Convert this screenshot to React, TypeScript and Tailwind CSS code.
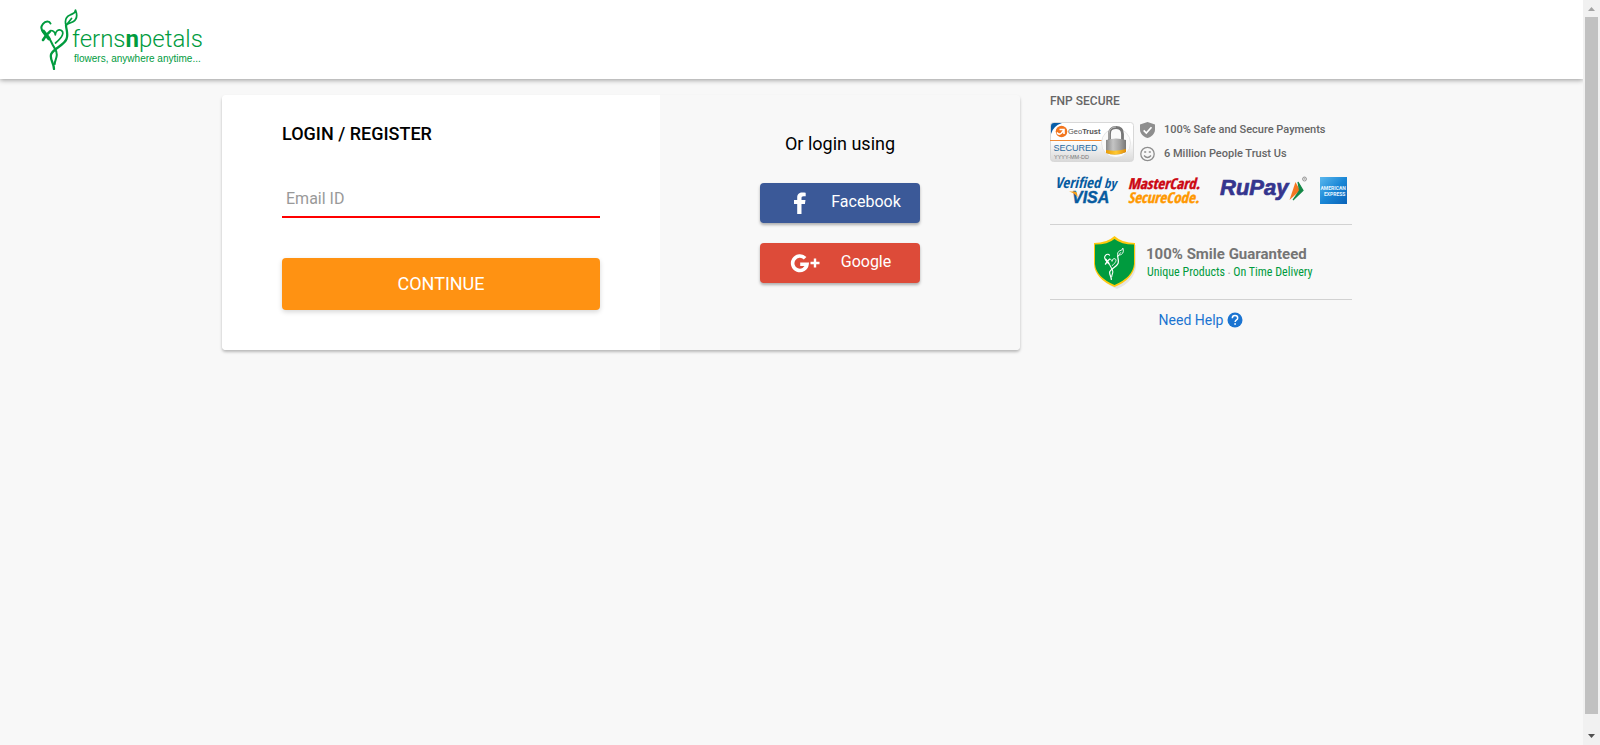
import React from "react";

function Sprig({ className }: { className: string }) {
  return (
    <svg viewBox="0 0 38 62" className={className} fill="none" stroke="currentColor" strokeLinecap="round" strokeLinejoin="round" aria-hidden="true">
      <path strokeWidth="2" d="M10.500 15.500C9.500 12.800 5.500 12.800 3 15.800C.6 18.800 1 22 4 24.500C6.500 26.500 9 29 12 35.500C14 40 17 42 16.800 47C16.600 51 14.500 53 14.800 56" />
      <path strokeWidth="3.600" d="M3.500 23.500L8.800 30.500" />
      <path strokeWidth="2.600" d="M10 23.500C8 25 5 28.500 3 32" />
      <path strokeWidth="1.700" d="M10.500 22.500C13 22.500 15 24.500 15.300 27C15.500 23 18.500 21 21 22.200C24.500 24 23 29 15.500 35" />
      <path strokeWidth="2.300" d="M26 17.500C26.300 22 28.500 26 26.500 31C24 37.500 14 40 11.200 46C9.300 51 14 55 14 61" />
      <path strokeWidth="1.700" d="M26 17.500C24.500 12 26.500 8.500 30 7C33 5.500 35.500 5.500 35.500 2C37.500 7 36.800 11.500 33 13.800C30.500 15.300 27.500 15 26 17.500L31.500 10.500" />
    </svg>
  );
}

function Logo() {
  return (
    <a href="#home" className="flex items-start text-[#009b3e]" aria-label="fernsnpetals">
      <Sprig className="h-[62px] w-[38px]" />
      <span className="-ml-1.5 flex flex-col pt-[15px]">
        <span className="text-2xl font-light leading-8">
          ferns<b className="font-bold">n</b>petals
        </span>
        <span className="pl-0.5 font-['Liberation_Sans'] text-[10px] leading-2">flowers, anywhere anytime...</span>
      </span>
    </a>
  );
}

function Scrollbar() {
  return (
    <div className="flex w-[17px] shrink-0 flex-col items-center bg-[#f1f1f1]" aria-hidden="true">
      <svg viewBox="0 0 17 17" className="size-[17px]"><path d="M5 11h7L8.500 7z" fill="#a3a3a3" /></svg>
      <div className="w-[13px] flex-1 bg-[#c1c1c1]" />
      <svg viewBox="0 0 17 31" className="h-[31px] w-[17px]"><path d="M5 20h7L8.500 24z" fill="#505050" /></svg>
    </div>
  );
}

function GeoTrust() {
  return (
    <svg viewBox="0 0 84 40" className="h-10 w-[84px]" role="img" aria-label="GeoTrust Secured">
      <defs>
        <linearGradient id="plate" x1="0" y1="0" x2="0" y2="1">
          <stop offset="0" stopColor="#fff" /><stop offset=".45" stopColor="#fff" /><stop offset="1" stopColor="#d9d9d9" />
        </linearGradient>
        <linearGradient id="steel"><stop offset="0" stopColor="#888" /><stop offset=".35" stopColor="#c4c4c4" /><stop offset=".7" stopColor="#a2a2a2" /><stop offset="1" stopColor="#777" /></linearGradient>
        <linearGradient id="brass"><stop offset="0" stopColor="#e99b08" /><stop offset=".5" stopColor="#ffc933" /><stop offset="1" stopColor="#e18c08" /></linearGradient>
      </defs>
      <rect x=".5" y=".5" width="83" height="39" rx="3" fill="url(#plate)" stroke="#d8d8d8" />
      <path d="M1 12V4Q1 1 4 1H12Q3 4 1 12" fill="#075da8" />
      <path d="M0 18.500H53" stroke="#f18a35" strokeWidth="1" />
      <circle cx="11.500" cy="9.500" r="5.800" fill="#f2761f" />
      <path d="M7 10.500Q9 13.500 11.500 11L13.500 8.500M9.500 7.500H14V12" stroke="#fff" strokeWidth="1.600" fill="none" />
      <text x="18" y="12" fontSize="7.500" fill="#555" fontFamily="Liberation Sans">Geo<tspan fontWeight="700">Trust</tspan></text>
      <text x="3.500" y="28.500" fontSize="9" fill="#27699f" fontFamily="Liberation Sans">SECURED</text>
      <text x="4" y="36.500" fontSize="5.500" fill="#777" fontFamily="Liberation Sans">YYYY-MM-DD</text>
      <circle cx="66" cy="21" r="14.500" fill="#fafafa" stroke="#ddd" strokeWidth=".7" />
      <path d="M59.500 18V12Q59.500 5.500 66 5.500T72.500 12V18" fill="none" stroke="#767676" strokeWidth="2.800" />
      <path d="M59 17V12Q59 5 66 5" fill="none" stroke="#bbb" strokeWidth="1" />
      <path d="M56 18Q66 15 76 18V30Q66 35 56 31z" fill="url(#steel)" />
      <path d="M56 28Q66 30 76 27V30Q66 35 56 31z" fill="url(#brass)" />
    </svg>
  );
}

function PaymentMarks() {
  return (
    <svg viewBox="0 -8 302 40" className="h-10 w-full" role="img" aria-label="Accepted payment networks">
      <defs>
        <linearGradient id="amex" x1="0" y1="0" x2="1" y2="1"><stop offset="0" stopColor="#5bb8ee" /><stop offset=".5" stopColor="#1a87d6" /><stop offset="1" stopColor="#0a62b8" /></linearGradient>
      </defs>
      <g fontFamily="'Open Sans Condensed','Liberation Sans Narrow','Liberation Sans',sans-serif" fontStyle="italic" fontWeight="700">
        <text x="5" y="11.500" fontSize="15" fill="#075b9f">Verified <tspan fontSize="13">by</tspan></text>
        <text x="22" y="27" fontSize="16" fill="#075b9f" stroke="#075b9f" strokeWidth=".4" fontFamily="Liberation Sans">VISA</text>
        <path d="M19 15.500H25Q27 15.500 27.200 18L27.500 21.500Q25 17 19 15.500" fill="#f7a01b" />
        <text x="78" y="12.500" fontSize="15" fill="#cc0712" stroke="#cc0712" strokeWidth=".4">MasterCard.</text>
        <text x="78" y="27" fontSize="15" fill="#ff9800" stroke="#ff9800" strokeWidth=".4">SecureCode.</text>
      </g>
      <text x="170" y="19" fontSize="22" fontFamily="Liberation Sans" fontStyle="italic" fontWeight="700" fill="#35358e" stroke="#35358e" strokeWidth=".7">RuPay</text>
      <path d="M245.500 6L250 14.500L239.500 24z" fill="#f47721" /><path d="M248 6L253 14.500L243 24L249.500 14.500z" fill="#138746" stroke="#138746" strokeWidth="1.200" />
      <circle cx="254.500" cy="3" r="2" fill="none" stroke="#777" strokeWidth=".7" /><path d="M254 4V2H255V4" fill="none" stroke="#777" strokeWidth=".4" />
      <rect x="270" y="1" width="27" height="27" fill="url(#amex)" />
      <text x="270.500" y="14" fontSize="5" fontWeight="700" fill="#e8f5ff">AMERICAN</text>
      <text x="274" y="20" fontSize="5" fontWeight="700" fill="#e8f5ff">EXPRESS</text>
    </svg>
  );
}

function GuaranteeShield() {
  return (
    <div className="relative h-[54px] w-[42px] text-white">
      <svg viewBox="0 0 42 54" className="size-full" aria-hidden="true">
        <path d="M3 10Q15 11 22 4Q30 11 42 10V31Q41 46 23 54Q4 46 3 31z" fill="#e5e5e5" />
        <path d="M0 8Q13 8 20.500 1Q28 8 41 8V29Q40 44 20.500 52Q1 44 0 29z" fill="#ffc90e" />
        <path d="M1 9.500Q14 9.500 20.500 4Q27 9.500 40 9.500V29Q39 42 20.500 50Q2 42 1 29z" fill="#009b3e" />
      </svg>
      <div className="absolute left-2 top-3"><Sprig className="h-[33px] w-6" /></div>
    </div>
  );
}

export default function App() {
  return (
    <div className="flex min-h-screen bg-[#f8f8f8] font-[Roboto,sans-serif] text-black">
      <div className="min-w-0 flex-1">
        <header className="flex h-[79px] items-start bg-white pl-10 pt-2 shadow-[0_1px_5px_rgba(0,0,0,0.4)]">
          <Logo />
        </header>
        <div className="mx-auto flex max-w-[1139px] items-start gap-[30px] pt-4 pr-[9px]">
          <main className="flex flex-1 overflow-hidden rounded shadow-[0_2px_3px_rgba(0,0,0,0.26)]">
            <form className="w-[438px] bg-white px-[60px] pb-10 pt-[27px]" onSubmit={(e) => e.preventDefault()}>
              <h1 className="text-lg font-medium leading-6">LOGIN / REGISTER</h1>
              <input id="email" type="email" aria-label="Email ID" placeholder="Email ID" className="mt-8 h-10 w-full border-b-2 border-[#f00] px-1 pt-0.5 text-base outline-none placeholder:text-[#999]" />
              <button type="submit" className="mt-10 block h-[52px] w-full rounded bg-[#ff9212] text-lg text-white shadow-[0_2px_5px_rgba(0,0,0,0.16)]">CONTINUE</button>
            </form>
            <section className="flex flex-1 flex-col items-center gap-5 bg-[#f8f8f8] pt-[37px]">
              <h2 className="mb-[7px] text-lg leading-6">Or login using</h2>
              <button type="button" className="flex h-10 w-40 items-center rounded bg-[#3b5998] pb-0.5 pl-7 text-base text-white shadow-[0_2px_3px_rgba(0,0,0,0.3)]">
                <svg viewBox="0 0 24 24" className="mt-0.5 size-6" fill="currentColor" aria-hidden="true"><path d="M9.200 23V13H6V9h3.200V6.500C9.200 3 11.300 1.500 14.300 1.500c1.400 0 2.900.2 3.400.3v3.500h-2.200c-1.700 0-2 .8-2 2V9h4l-.6 4h-3.400v10z" /></svg>
                <span className="flex-1 px-3 text-center">Facebook</span>
              </button>
              <button type="button" className="flex h-10 w-40 items-center rounded bg-[#dd4b39] pb-0.5 pl-7 text-base text-white shadow-[0_2px_3px_rgba(0,0,0,0.3)]">
                <svg viewBox="0 0 32 24" className="mt-0.5 h-6 w-8" fill="none" stroke="currentColor" aria-hidden="true"><path strokeWidth="3.600" d="M17.100 7.300A7.200 7.200 0 1 0 19 13.200h-6.800" /><path strokeWidth="2.400" d="M27 7.500v9M22.500 12h9" /></svg>
                <span className="flex-1 pl-1 pr-3 text-center">Google</span>
              </button>
            </section>
          </main>
          <aside className="w-[302px] text-[#666]">
            <h2 className="text-xs font-medium leading-3">FNP SECURE</h2>
            <div className="mt-[15px] flex gap-[6px]">
              <GeoTrust />
              <ul className="text-[11px] font-medium leading-4">
                <li className="flex gap-[9px]">
                  <svg viewBox="0 0 15 16" className="h-4 w-[15px]" aria-hidden="true"><path d="M7.500 0L15 2.600v5C15 11.500 12 15 7.500 16C3 15 0 11.500 0 7.600v-5z" fill="#8e8e8e" /><path d="M3.700 8.300L6.300 11L11.500 5.300" fill="none" stroke="#fff" strokeWidth="1.700" /></svg>
                  100% Safe and Secure Payments
                </li>
                <li className="mt-2 flex gap-[9px]">
                  <svg viewBox="0 0 15 16" className="h-4 w-[15px]" fill="none" stroke="#8e8e8e" strokeWidth="1.300" aria-hidden="true"><circle cx="7.500" cy="8" r="6.700" /><path d="M4 9.500Q7.500 13.500 11 9.500" /><path d="M4.200 6H6.200M8.800 6H10.800" /></svg>
                  6 Million People Trust Us
                </li>
              </ul>
            </div>
            <div className="mt-[6px] border-b border-[#d2d2d2] pb-4"><PaymentMarks /></div>
            <div className="flex h-[75px] gap-[10px] border-b border-[#d2d2d2] pl-11 pt-[10px]">
              <GuaranteeShield />
              <div className="pt-[9px] text-[#757575]">
                <p className="text-[15px] font-bold leading-5">100% Smile Guaranteed</p>
                <p className="pl-px font-['Roboto_Condensed','Roboto'] text-xs leading-4 text-[#009b3e]">Unique Products <span className="text-[8px] text-[#aaa]">•</span> On Time Delivery</p>
              </div>
            </div>
            <a href="#help" className="mt-3 flex items-center justify-center gap-1 text-sm leading-4 text-[#1b74d1]">
              Need Help
              <svg viewBox="0 0 16 16" className="size-4" aria-hidden="true"><circle cx="8" cy="8" r="7.500" fill="#1b74d1" /><path d="M5.300 6.200Q5.300 3.500 8 3.500T10.700 6Q10.700 7.100 9.500 7.900T8.100 10" fill="none" stroke="#fff" strokeWidth="1.500" /><rect x="7.300" y="11.200" width="1.600" height="1.600" fill="#fff" /></svg>
            </a>
          </aside>
        </div>
      </div>
      <Scrollbar />
    </div>
  );
}
